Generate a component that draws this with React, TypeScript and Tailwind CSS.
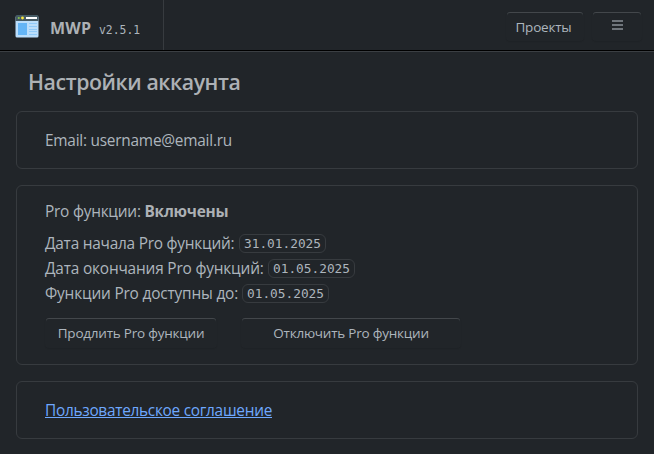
import type { ReactNode } from "react";

function BrowserIcon() {
  return (
    <svg width="24" height="24" viewBox="0 0 24 24" className="mb-0.5 shrink-0">
      <rect x="0.5" y="2" width="23" height="21.5" rx="1.5" fill="#bbdefb" />
      <path d="M0.5 7V2.5q0-1.5 1.5-1.5h20q1.5 0 1.5 1.5v4.5z" fill="#455a64" />
      <circle cx="3.8" cy="4" r="1.1" fill="#8bc34a" />
      <circle cx="7.5" cy="4" r="1.4" fill="#ffeb3b" />
      <rect x="11" y="3" width="11" height="2" fill="#fff" />
      <rect x="3" y="9" width="9" height="12" fill="#64b5f6" />
      <path d="M14 9.5h8M14 12.5h8M14 15.5h8M14 17.5h8M14 20.5h8" stroke="#90caf9" />
    </svg>
  );
}

function Button({ className, children }: { className: string; children: ReactNode }) {
  return (
    <button
      className={`flex items-center justify-center rounded border border-transparent bg-[#212529] text-[13.5px] leading-[21px] tracking-[-0.22px] whitespace-nowrap shadow-[inset_0_1px_0_#43474b,0_1px_1px_rgba(0,0,0,0.08)] ${className}`}
    >
      {children}
    </button>
  );
}

function Card({ className, children }: { className: string; children: ReactNode }) {
  return (
    <section className={`rounded-md border border-[#373b3f] pl-7 text-[15.4px] leading-6 tracking-[-0.23px] whitespace-nowrap ${className}`}>
      {children}
    </section>
  );
}

function DateRow({ label, date, spacing }: { label: string; date: string; spacing: string }) {
  return (
    <div className="flex h-[25px] items-center">
      <span className={spacing}>{label}</span>
      <code className="flex h-[19px] w-[87px] items-center justify-center rounded-md border border-[#373b3f] pt-0.5 font-['DejaVu_Sans_Mono',monospace] text-[12.8px] leading-none tracking-normal">
        {date}
      </code>
    </div>
  );
}

export default function App() {
  return (
    <div className="h-[454px] w-[654px] overflow-hidden bg-[#212529] font-['Open_Sans','Noto_Sans',sans-serif] text-[#adb5bd]">
      <header className="flex h-[52px] justify-between border-b border-[#3b3f43] shadow-[inset_0_-1px_0_#000]">
        <div className="flex h-[50px] w-[164px] items-center border-r border-[#373b3f] pt-1 pl-[15px]">
          <BrowserIcon />
          <span className="ml-[11px] w-[49px] pt-0.5 text-[16px] font-bold tracking-[0.2px] text-[#adb1b5]">MWP</span>
          <span className="pt-[7px] font-['DejaVu_Sans_Mono',monospace] text-[11.4px]">v2.5.1</span>
        </div>
        <div className="flex gap-2 pt-[11px] pr-3">
          <Button className="h-[30px] w-[78px] pt-0.5 pr-[3px]">Проекты</Button>
          <Button className="h-[30px] w-[50px] pb-0.5">
            <svg width="11" height="10" viewBox="0 0 11 10" stroke="#6f757b" strokeWidth="2">
              <path d="M0 1h11M0 5h11M0 9h11" />
            </svg>
          </Button>
        </div>
      </header>
      <main className="px-4">
        <h1 className="flex h-[59px] items-center pl-3 text-[21.3px] font-semibold tracking-[-0.42px] text-[#adb1b5]">Настройки аккаунта</h1>
        <Card className="h-[58px] pt-[17px]">Email: username@email.ru</Card>
        <Card className="mt-4 h-[180px] pt-3.5">
          <p>
            Pro функции: <b className="text-[#adb1b5]">Включены</b>
          </p>
          <div className="mt-[7px]">
            <DateRow label="Дата начала Pro функций:" date="31.01.2025" spacing="w-[194px]" />
            <DateRow label="Дата окончания Pro функций:" date="01.05.2025" spacing="w-[223px] tracking-[-0.18px]" />
            <DateRow label="Функции Pro доступны до:" date="01.05.2025" spacing="w-[197px] tracking-[-0.18px]" />
          </div>
          <div className="mt-[11px] flex gap-6">
            <Button className="h-[31px] w-[172px] pt-0.5">Продлить Pro функции</Button>
            <Button className="h-[31px] w-[220px] pt-0.5">Отключить Pro функции</Button>
          </div>
        </Card>
        <Card className="mt-4 h-[58px] pt-[17px]">
          <a className="tracking-[-0.28px] text-[#6ea8fe] underline">Пользовательское соглашение</a>
        </Card>
      </main>
    </div>
  );
}
